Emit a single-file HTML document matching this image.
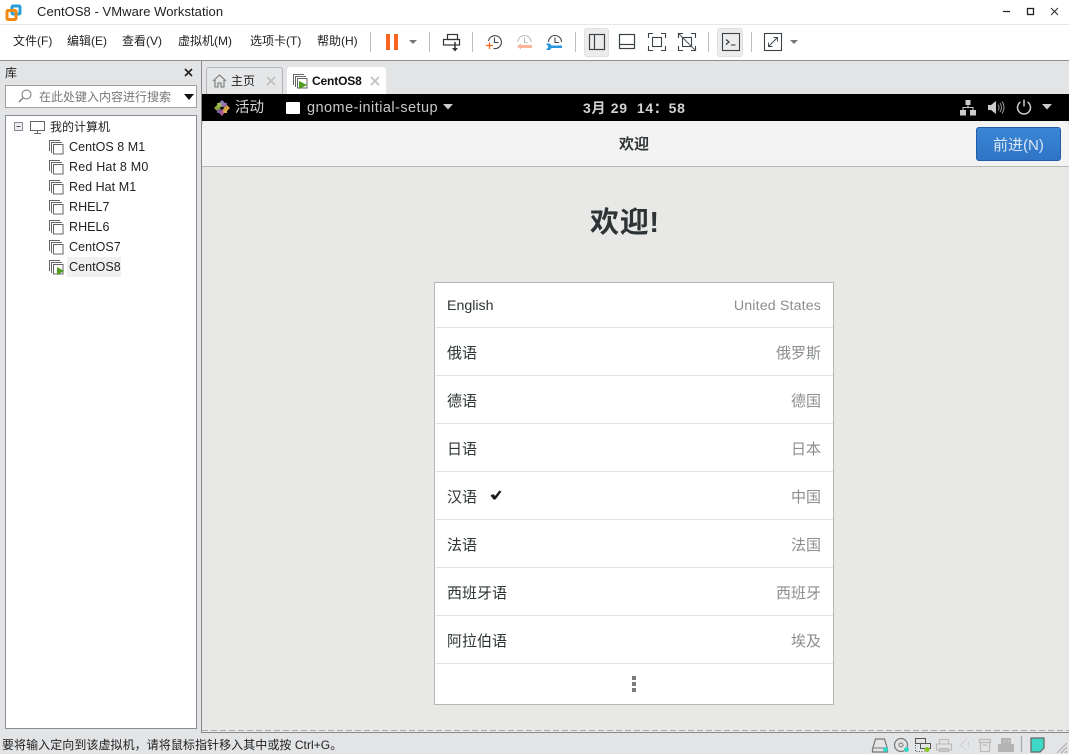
<!DOCTYPE html>
<html><head><meta charset="utf-8">
<style>
html,body{margin:0;padding:0;width:1069px;height:754px;overflow:hidden;background:#e3e4e6}
body{position:relative;font-family:"Liberation Sans","Noto Sans CJK SC",sans-serif;color:#222}
.a{position:absolute}
.t{position:absolute;white-space:nowrap;line-height:20px}
svg{position:absolute;overflow:visible}
.m{font-size:12px;top:31px;color:#222}
.v{font-size:12.5px;left:69px;color:#222;letter-spacing:.05px}
.r{position:absolute;left:1px;width:397px;border-bottom:1px solid #e2e2e2;background:#fff}
.l{position:absolute;left:11px;font-size:15px;color:#2e3436;white-space:nowrap;line-height:20px}
.c{position:absolute;right:12px;font-size:15px;color:#8b8e8f;white-space:nowrap;line-height:20px}
.e{font-size:14.2px}
</style></head><body>

<!-- title bar -->
<div class="a" style="left:0;top:0;width:1069px;height:25px;background:#fff;border-bottom:1px solid #e6e6e6;box-sizing:border-box"></div>
<svg style="left:5px;top:4px" width="17" height="17"><rect x="7" y="2" width="8" height="8" fill="none" stroke="#2a9fd8" stroke-width="3" rx="1"/><rect x="2" y="6.500" width="9" height="9" fill="none" stroke="#f08a12" stroke-width="3" rx="1"/></svg>
<div class="t" style="left:37px;top:2px;font-size:13px;letter-spacing:.05px;color:#222">CentOS8 - VMware Workstation</div>
<svg style="left:1000px;top:5px" width="65" height="16" fill="none" stroke="#222"><path d="M3 6.500h7" stroke-width="1.2"/><rect x="27.500" y="3.500" width="6" height="6" stroke-width="1.3"/><path d="M51 3l7 7M58 3l-7 7" stroke-width=".9"/></svg>

<!-- menu/toolbar -->
<div class="a" style="left:0;top:25px;width:1069px;height:35px;background:#fff"></div>
<div class="a" style="left:0;top:60px;width:1069px;height:1px;background:#909090"></div>
<div class="t m" style="left:13px">文件(F)</div>
<div class="t m" style="left:67px">编辑(E)</div>
<div class="t m" style="left:122px">查看(V)</div>
<div class="t m" style="left:178px">虚拟机(M)</div>
<div class="t m" style="left:250px">选项卡(T)</div>
<div class="t m" style="left:317px">帮助(H)</div>

<div class="a" style="left:370px;top:32px;width:1px;height:20px;background:#bbb"></div>
<div class="a" style="left:386px;top:34px;width:4px;height:16px;background:#f9641e"></div>
<div class="a" style="left:394px;top:34px;width:4px;height:16px;background:#f9641e"></div>
<svg style="left:408px;top:39px" width="10" height="6"><path d="M1 1h8l-4 4z" fill="#777"/></svg>
<div class="a" style="left:429px;top:32px;width:1px;height:20px;background:#bbb"></div>
<svg style="left:442px;top:33px" width="20" height="20" fill="none" stroke="#333" stroke-width="1.2"><rect x="5.500" y="1.500" width="10" height="5"/><rect x="1.500" y="6.500" width="16" height="5.500"/><path d="M13 9v8" stroke-width="1.5"/><path d="M10 15h6l-3 3.500z" fill="#333" stroke="none"/></svg>
<div class="a" style="left:472px;top:32px;width:1px;height:20px;background:#bbb"></div>
<svg style="left:486px;top:34px" width="20" height="18" fill="none" stroke="#444" stroke-width="1.1"><path d="M2.500 7a6.500 6.500 0 1 1 5 7.500"/><path d="M8.500 3.500v5h4"/><path d="M0 11.500h7M3.500 8.500v6.500" stroke="#f9641e" stroke-width="1.300"/></svg>
<svg style="left:516px;top:34px" width="20" height="18" fill="none" stroke="#bbb" stroke-width="1"><path d="M2 8a6.500 6.500 0 0 1 13 0"/><path d="M8.500 3.500v5h3"/><path d="M1 12.500l4-3v1.500h11v3H5v1.500z" fill="#fbb49a" stroke="none"/></svg>
<svg style="left:545px;top:34px" width="20" height="18" fill="none" stroke="#444" stroke-width="1.1"><path d="M3.500 8a6.500 6.500 0 0 1 13 0"/><path d="M10 3.500v5h4"/><path d="M1 9.500h4l1.500 2H17v2.500H6.500L5 16H1l2.500-3z" fill="#2a95dd" stroke="none"/></svg>
<div class="a" style="left:575px;top:32px;width:1px;height:20px;background:#bbb"></div>
<div class="a" style="left:584px;top:28px;width:25px;height:29px;background:#ececec;border:1px solid #e0e0e0;border-radius:3px;box-sizing:border-box"></div>
<svg style="left:589px;top:34px" width="16" height="16" fill="none" stroke="#3a4248" stroke-width="1.2"><rect x=".5" y=".5" width="15" height="15"/><path d="M5.500 0v16"/></svg>
<svg style="left:619px;top:34px" width="16" height="16" fill="none" stroke="#3a4248" stroke-width="1.2"><rect x=".5" y=".5" width="15" height="14"/><path d="M0 10.500h16"/></svg>
<svg style="left:648px;top:33px" width="18" height="18" fill="none" stroke="#3a4248" stroke-width="1.1"><path d="M.5 5V.5H5M13 .5h4.500V5M17.500 13v4.500H13M5 17.500H.500V13"/><rect x="4.500" y="4.500" width="9" height="9"/></svg>
<svg style="left:678px;top:33px" width="18" height="18" fill="none" stroke="#3a4248" stroke-width="1.1"><path d="M.5 5V.5H5M13 .5h4.500V5M17.500 13v4.500H13M5 17.500H.500V13"/><rect x="4.500" y="4.500" width="9" height="9"/><path d="M0 0l18 18" stroke="#4a5258" stroke-width="1"/></svg>
<div class="a" style="left:708px;top:32px;width:1px;height:20px;background:#bbb"></div>
<div class="a" style="left:717px;top:28px;width:26px;height:29px;background:#ececec;border:1px solid #e0e0e0;border-radius:3px;box-sizing:border-box"></div>
<svg style="left:722px;top:33px" width="18" height="18" fill="none" stroke="#3a4248" stroke-width="1.1"><rect x=".5" y=".5" width="17" height="17"/><path d="M4 6.500l3 2.500-3 2.500" stroke-width="1.3"/><path d="M9 12h4.500"/></svg>
<div class="a" style="left:751px;top:32px;width:1px;height:20px;background:#bbb"></div>
<svg style="left:764px;top:33px" width="18" height="18" fill="none" stroke="#3a4248" stroke-width="1.1"><rect x=".5" y=".5" width="17" height="17"/><path d="M5 13l8-8M9.500 4.500h4v4M4.500 9.500v4h4" stroke-width=".9"/></svg>
<svg style="left:789px;top:39px" width="10" height="6"><path d="M1 1h8l-4 4z" fill="#777"/></svg>

<!-- library -->
<div class="t" style="left:5px;top:63px;font-size:12px;color:#222">库</div>
<svg style="left:184px;top:68px" width="10" height="10" stroke="#222" stroke-width="1.6"><path d="M1 1l7 7M8 1l-7 7"/></svg>
<div class="a" style="left:5px;top:85px;width:192px;height:23px;background:#fff;border:1px solid #a0a0a0;box-sizing:border-box"></div>
<svg style="left:17px;top:88px" width="16" height="16" fill="none" stroke="#777" stroke-width="1"><circle cx="9.500" cy="6.500" r="4.500"/><path d="M6 10l-4 4" stroke-width="1.300"/></svg>
<div class="t" style="left:39px;top:87px;font-size:12px;color:#777">在此处键入内容进行搜索</div>
<svg style="left:184px;top:94px" width="10" height="6"><path d="M0 0h10l-5 6z" fill="#111"/></svg>

<div class="a" style="left:5px;top:115px;width:192px;height:614px;background:#fff;border:1px solid #8b8b96;box-sizing:border-box"></div>
<svg style="left:14px;top:122px" width="10" height="10" fill="#eee" stroke="#8a8a99"><rect x=".5" y=".5" width="8" height="8"/><path d="M2.500 4.500h4" stroke="#555"/></svg>
<svg style="left:30px;top:121px" width="16" height="13" fill="none" stroke="#666"><rect x=".5" y=".5" width="14" height="9"/><path d="M7.500 10v2M4 12.500h7"/></svg>
<div class="t" style="left:50px;top:117px;font-size:12px;color:#222">我的计算机</div>

<svg style="left:49px;top:140px" width="15" height="15" fill="#fff" stroke="#666"><path d="M.5 11V.5H11" fill="none"/><path d="M2.500 13V2.500H13" fill="none"/><rect x="4.500" y="4.500" width="9.500" height="9.500"/></svg>
<div class="t v" style="top:137px">CentOS 8 M1</div>
<svg style="left:49px;top:160px" width="15" height="15" fill="#fff" stroke="#666"><path d="M.5 11V.5H11" fill="none"/><path d="M2.500 13V2.500H13" fill="none"/><rect x="4.500" y="4.500" width="9.500" height="9.500"/></svg>
<div class="t v" style="top:157px;letter-spacing:.2px">Red Hat 8 M0</div>
<svg style="left:49px;top:180px" width="15" height="15" fill="#fff" stroke="#666"><path d="M.5 11V.5H11" fill="none"/><path d="M2.500 13V2.500H13" fill="none"/><rect x="4.500" y="4.500" width="9.500" height="9.500"/></svg>
<div class="t v" style="top:177px">Red Hat M1</div>
<svg style="left:49px;top:200px" width="15" height="15" fill="#fff" stroke="#666"><path d="M.5 11V.5H11" fill="none"/><path d="M2.500 13V2.500H13" fill="none"/><rect x="4.500" y="4.500" width="9.500" height="9.500"/></svg>
<div class="t v" style="top:197px">RHEL7</div>
<svg style="left:49px;top:220px" width="15" height="15" fill="#fff" stroke="#666"><path d="M.5 11V.5H11" fill="none"/><path d="M2.500 13V2.500H13" fill="none"/><rect x="4.500" y="4.500" width="9.500" height="9.500"/></svg>
<div class="t v" style="top:217px">RHEL6</div>
<svg style="left:49px;top:240px" width="15" height="15" fill="#fff" stroke="#666"><path d="M.5 11V.5H11" fill="none"/><path d="M2.500 13V2.500H13" fill="none"/><rect x="4.500" y="4.500" width="9.500" height="9.500"/></svg>
<div class="t v" style="top:237px">CentOS7</div>
<div class="a" style="left:67px;top:257px;width:54px;height:20px;background:#f0f0f0"></div>
<svg style="left:49px;top:260px" width="15" height="15" fill="#fff" stroke="#666"><path d="M.5 11V.5H11" fill="none"/><path d="M2.500 13V2.500H13" fill="none"/><rect x="4.500" y="4.500" width="9.500" height="9.500"/><path d="M8 7l7 4-7 4z" fill="#4f9e1c" stroke="none"/></svg>
<div class="t v" style="top:257px">CentOS8</div>

<!-- right area frame -->
<div class="a" style="left:201px;top:61px;width:868px;height:672px;border-left:1px solid #8a8a8a;box-sizing:border-box"></div>

<!-- tabs -->
<div class="a" style="left:206px;top:67px;width:77px;height:27px;background:#e6e7e9;border:1px solid #b4b4b8;border-bottom:0;border-radius:3px 3px 0 0;box-sizing:border-box"></div>
<svg style="left:212px;top:74px" width="15" height="14" fill="none" stroke="#777" stroke-width="1.1"><path d="M1 7l6.500-6L14 7M3 6v7h3V9h3v4h3V6"/></svg>
<div class="t" style="left:231px;top:71px;font-size:12px;color:#222">主页</div>
<svg style="left:266px;top:76px" width="10" height="10" stroke="#c0c0c0" stroke-width="1.6"><path d="M1 1l8 8M9 1l-8 8"/></svg>
<div class="a" style="left:287px;top:67px;width:99px;height:27px;background:#fff;border-radius:3px 3px 0 0"></div>
<svg style="left:293px;top:74px" width="15" height="15" fill="#fff" stroke="#666"><path d="M.5 11V.5H11" fill="none"/><path d="M2.500 13V2.500H13" fill="none"/><rect x="4.500" y="4.500" width="9.500" height="9.500"/><path d="M6 7l8 4-8 4z" fill="#4f9e1c" stroke="none"/></svg>
<div class="t" style="left:312px;top:71px;font-size:12px;font-weight:bold;color:#111;letter-spacing:-.15px">CentOS8</div>
<svg style="left:370px;top:76px" width="10" height="10" stroke="#c0c0c0" stroke-width="1.6"><path d="M1 1l8 8M9 1l-8 8"/></svg>

<!-- guest top bar -->
<div class="a" style="left:202px;top:94px;width:867px;height:27px;background:#000"></div>
<svg style="left:214px;top:100px" width="16" height="16"><path d="M8 0l3 3-3 4-3-4z" fill="#8f7fb0"/><path d="M16 8l-3 3-4-3 4-3z" fill="#d8a040"/><path d="M8 16l-3-3 3-4 3 3z" fill="#b05a8c"/><path d="M0 8l3-3 4 3-4 3z" fill="#8aa83a"/><path d="M3 3h3.500L8 7 3.500 6.500z" fill="#a6bd55"/><path d="M13 3H9.500L8 7l4.500-.5z" fill="#9a6fb0"/><path d="M13 13H9.500L9 9l4 .5z" fill="#e0b050"/><path d="M3 13h3.500L7 9l-4 .5z" fill="#7d5fa0"/></svg>
<div class="t" style="left:235px;top:98px;font-size:14.500px;color:#d8d8d8">活动</div>
<div class="a" style="left:286px;top:102px;width:14px;height:12px;background:#fff;border-radius:1px"></div>
<div class="t" style="left:307px;top:98px;font-size:14.500px;color:#c8c8c8;letter-spacing:.45px">gnome-initial-setup</div>
<svg style="left:443px;top:104px" width="10" height="6"><path d="M0 0h10L5 5.500z" fill="#ccc"/></svg>
<div class="t" style="left:583px;top:98px;font-size:14px;font-weight:bold;color:#d2d2d2;letter-spacing:.7px">3月 29&nbsp; 14：58</div>
<svg style="left:960px;top:100px" width="17" height="16" fill="#ccc"><rect x="5.500" y="0" width="5" height="5"/><rect x="0" y="10" width="6" height="5.500"/><rect x="10" y="10" width="6" height="5.500"/><path d="M8 5v3M3 10V7.500h10V10" fill="none" stroke="#ccc"/></svg>
<svg style="left:988px;top:100px" width="16" height="15" fill="none"><path d="M0 5h3l5-4v13l-5-4H0z" fill="#ccc"/><path d="M10 4.500q2 3 0 6M12 3q3 4.500 0 9M14 1.500q4 6 0 12" stroke="#999"/></svg>
<svg style="left:1016px;top:99px" width="16" height="16" fill="none" stroke="#ccc" stroke-width="1.500"><path d="M4.500 3a6.500 6.500 0 1 0 7 0M8 .5v7"/></svg>
<svg style="left:1042px;top:104px" width="10" height="6"><path d="M0 0h10L5 5.500z" fill="#ccc"/></svg>

<!-- gnome window -->
<div class="a" style="left:202px;top:121px;width:867px;height:46px;background:#f3f3f3;border-bottom:1px solid #b8b8b8;border-radius:6px 6px 0 0;box-sizing:border-box"></div>
<div class="a" style="left:202px;top:167px;width:867px;height:563px;background:#e8e8e7"></div>
<div class="t" style="left:619px;top:135px;font-size:15px;font-weight:bold;color:#303436">欢迎</div>
<div class="a" style="left:976px;top:127px;width:85px;height:34px;background:linear-gradient(#3c86d6,#2f74c5);border:1px solid #1f5da8;border-radius:3px;box-sizing:border-box"></div>
<div class="t" style="left:993px;top:136px;font-size:15px;color:#d8e6f6">前进(N)</div>

<div class="t" style="left:590px;top:206px;font-size:29px;line-height:34px;font-weight:bold;color:#2e3436;letter-spacing:.7px">欢迎!</div>

<!-- language list -->
<div class="a" style="left:434px;top:282px;width:400px;height:423px;background:#fff;border:1px solid #b6b6b3;box-sizing:border-box">
  <div class="r" style="top:0;height:44px"><div class="l e" style="top:13px">English</div><div class="c e" style="top:13px;letter-spacing:.15px">United States</div></div>
  <div class="r" style="top:45px;height:47px"><div class="l" style="top:16px">俄语</div><div class="c" style="top:16px">俄罗斯</div></div>
  <div class="r" style="top:93px;height:47px"><div class="l" style="top:16px">德语</div><div class="c" style="top:16px">德国</div></div>
  <div class="r" style="top:141px;height:47px"><div class="l" style="top:16px">日语</div><div class="c" style="top:16px">日本</div></div>
  <div class="r" style="top:189px;height:47px"><div class="l" style="top:16px">汉语</div><div class="c" style="top:16px">中国</div>
    <svg style="left:54px;top:18px" width="12" height="11"><path d="M.5 5.500l3-1.500 1.500 2L9.500 .5l2 1L5.500 9.500h-2z" fill="#1c1c1c"/></svg></div>
  <div class="r" style="top:237px;height:47px"><div class="l" style="top:16px">法语</div><div class="c" style="top:16px">法国</div></div>
  <div class="r" style="top:285px;height:47px"><div class="l" style="top:16px">西班牙语</div><div class="c" style="top:16px">西班牙</div></div>
  <div class="r" style="top:333px;height:47px"><div class="l" style="top:16px">阿拉伯语</div><div class="c" style="top:16px">埃及</div></div>
  <div class="a" style="left:197px;top:393px;width:4px;height:4px;background:#7b7b7b"></div>
  <div class="a" style="left:197px;top:399px;width:4px;height:4px;background:#7b7b7b"></div>
  <div class="a" style="left:197px;top:405px;width:4px;height:4px;background:#7b7b7b"></div>
</div>

<!-- status -->
<div class="a" style="left:202px;top:730px;width:867px;height:1px;background:repeating-linear-gradient(90deg,#aaa 0 6px,#e8e8e7 6px 9px)"></div>
<div class="a" style="left:202px;top:731px;width:867px;height:1px;background:#e8e8e7"></div>
<div class="a" style="left:202px;top:732px;width:867px;height:1px;background:#8a8a8a"></div>
<div class="a" style="left:0;top:733px;width:1069px;height:21px;background:#e3e4e6"></div>
<div class="t" style="left:2px;top:735px;font-size:12px;color:#222;letter-spacing:.06px">要将输入定向到该虚拟机，请将鼠标指针移入其中或按 Ctrl+G。</div>
<svg style="left:871px;top:737px" width="198" height="18" fill="none">
  <path d="M1.500 12l3-10h9l3 10v3h-15z" stroke="#777" stroke-width="1.200"/><path d="M2 11h14" stroke="#777"/><circle cx="14.500" cy="12.500" r="2.500" fill="#35d6c6"/>
  <circle cx="30" cy="8" r="6.500" stroke="#777" stroke-width="1.200"/><circle cx="30" cy="8" r="2" stroke="#777"/><circle cx="35.500" cy="12.500" r="2.500" fill="#35d6c6"/>
  <g transform="translate(-6 0)"><path d="M50.500 1.500h10v5h-10zM55.500 6.500h10v5h-10z" stroke="#555"/><path d="M50.500 8v6.500h9" stroke="#555" stroke-dasharray="1 1.500"/><circle cx="62" cy="12.500" r="2.500" fill="#84c51e"/></g>
  <g transform="translate(-7 0)"><path d="M75.500 6.500v-4h9v4M72.500 7h15v6h-15zM75.500 11.500h9v3h-9z" stroke="#bbb" stroke-width="1.200"/></g>
  <g transform="translate(-12 0)"><path d="M108 2l-7 6 7 6M104 6l-3 2 3 2M109.500 5v6" stroke="#ccc" stroke-width="1" stroke-dasharray="2 1"/></g>
  <g transform="translate(-12 0)"><path d="M120.500 2.500h11v3h-11zM121.500 5.500v9h9v-9M124 8h4" stroke="#bbb" stroke-width="1.200"/></g>
  <g transform="translate(-12 0)"><path d="M142 7V1h10v6h3v8h-16V7z" fill="#b4b4b4"/><path d="M145 4h1M149 4h1" stroke="#e3e4e6"/></g>
  <path d="M150.500 -1v16" stroke="#aaa" stroke-width="1.300"/>
  <g transform="translate(-8 0)"><path d="M168 1h13v10l-4 4h-9z" fill="#3dd8c6" stroke="#666" stroke-width="1.200"/></g>
  <path d="M186 16l10-10M190 16l6-6M194 16l2-2" stroke="#aaa"/>
</svg>
</body></html>
